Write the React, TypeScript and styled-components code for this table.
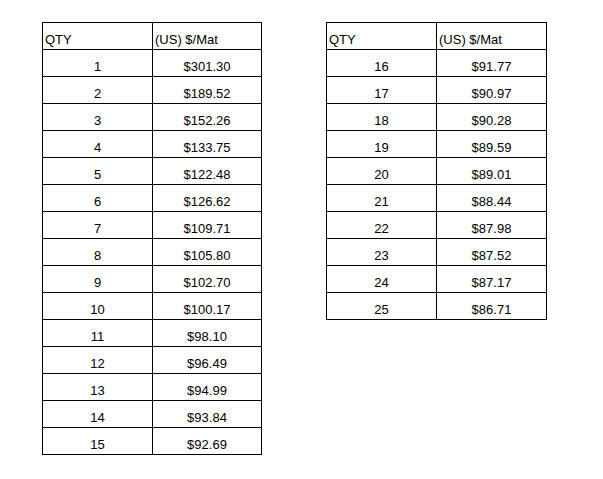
import React from "react";
import styled, { createGlobalStyle } from "styled-components";

const GlobalStyle = createGlobalStyle`
  body {
    margin: 0;
    background: #ffffff;
    font-family: "Liberation Sans", Arial, sans-serif;
    color: #000000;
  }
`;

const Page = styled.div`
  display: flex;
  align-items: flex-start;
  gap: 64px;
  padding: 22px 0 0 42px;
`;

const Sheet = styled.table`
  border-collapse: collapse;
  table-layout: fixed;
`;

const Cell = styled.td<{ $head?: boolean; $wide?: boolean }>`
  width: ${(p) => (p.$wide ? 110 : 109)}px;
  height: 27px;
  padding: 0 2px 3px;
  border: 1px solid #000000;
  box-sizing: border-box;
  font-size: 13px;
  line-height: 13px;
  vertical-align: bottom;
  text-align: ${(p) => (p.$head ? "left" : "center")};
  white-space: nowrap;
`;

const left: [number, string][] = [
  [1, "$301.30"],
  [2, "$189.52"],
  [3, "$152.26"],
  [4, "$133.75"],
  [5, "$122.48"],
  [6, "$126.62"],
  [7, "$109.71"],
  [8, "$105.80"],
  [9, "$102.70"],
  [10, "$100.17"],
  [11, "$98.10"],
  [12, "$96.49"],
  [13, "$94.99"],
  [14, "$93.84"],
  [15, "$92.69"],
];

const right: [number, string][] = [
  [16, "$91.77"],
  [17, "$90.97"],
  [18, "$90.28"],
  [19, "$89.59"],
  [20, "$89.01"],
  [21, "$88.44"],
  [22, "$87.98"],
  [23, "$87.52"],
  [24, "$87.17"],
  [25, "$86.71"],
];

const PriceTable = ({ rows, wideLast }: { rows: [number, string][]; wideLast?: boolean }) => (
  <Sheet>
    <tbody>
      <tr>
        <Cell $head $wide>QTY</Cell>
        <Cell $head $wide={wideLast}>(US) $/Mat</Cell>
      </tr>
      {rows.map(([qty, price]) => (
        <tr key={qty}>
          <Cell $wide>{qty}</Cell>
          <Cell $wide={wideLast}>{price}</Cell>
        </tr>
      ))}
    </tbody>
  </Sheet>
);

export default function App() {
  return (
    <>
      <GlobalStyle />
      <Page>
        <PriceTable rows={left} />
        <PriceTable rows={right} wideLast />
      </Page>
    </>
  );
}
